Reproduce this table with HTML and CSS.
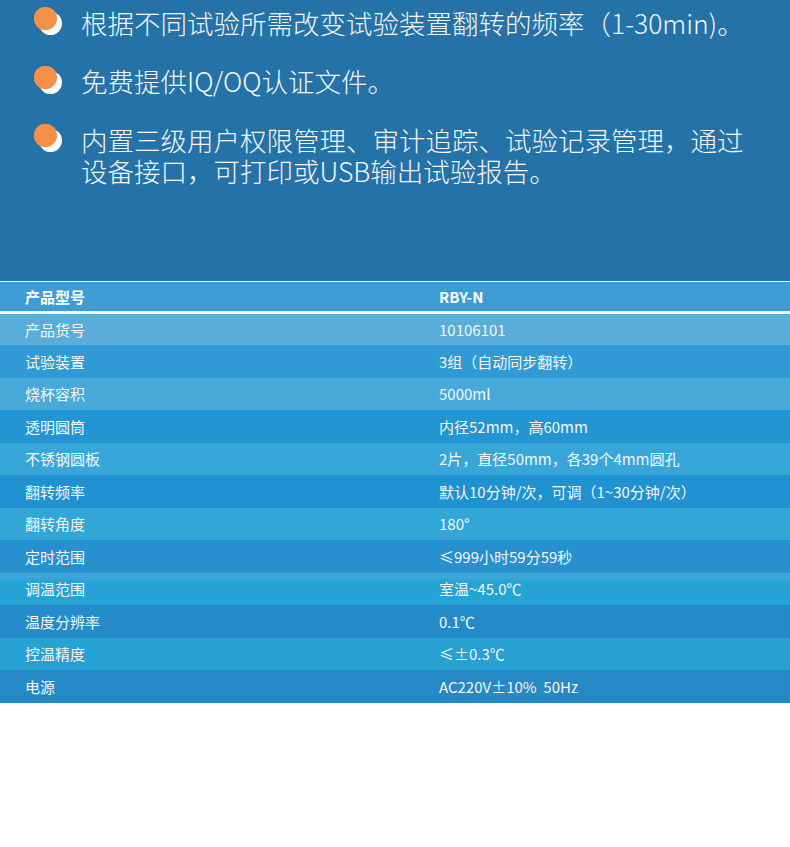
FILE: index.html
```html
<!DOCTYPE html>
<html lang="zh-CN">
<head>
<meta charset="utf-8">
<title>RBY-N</title>
<link rel="stylesheet" href="styles.css">
</head>
<body>
<section class="features">
  <ul class="feature-list">
    <li class="feature"><span class="dot"></span><p class="feature-text">根据不同试验所需改变试验装置翻转的频率（1-30min)。</p></li>
    <li class="feature"><span class="dot"></span><p class="feature-text">免费提供IQ/OQ认证文件。</p></li>
    <li class="feature"><span class="dot"></span><p class="feature-text">内置三级用户权限管理、审计追踪、试验记录管理，通过<br>设备接口，可打印或USB输出试验报告。</p></li>
  </ul>
</section>
<section class="specs">
  <div class="spec-head">
    <span>产品型号</span><span>RBY-N</span>
  </div>
  <div class="spec-body">
    <div class="row r1"><span>产品货号</span><span>10106101</span></div>
    <div class="row r2"><span>试验装置</span><span>3组（自动同步翻转）</span></div>
    <div class="row r3"><span>烧杯容积</span><span>5000ml</span></div>
    <div class="row r4"><span>透明圆筒</span><span>内径52mm，高60mm</span></div>
    <div class="row r5"><span>不锈钢圆板</span><span>2片，直径50mm，各39个4mm圆孔</span></div>
    <div class="row r6"><span>翻转频率</span><span>默认10分钟/次，可调（1~30分钟/次）</span></div>
    <div class="row r7"><span>翻转角度</span><span>180°</span></div>
    <div class="row r8"><span>定时范围</span><span>≤999小时59分59秒</span></div>
    <div class="row r9"><span>调温范围</span><span>室温~45.0℃</span></div>
    <div class="row r10"><span>温度分辨率</span><span>0.1℃</span></div>
    <div class="row r11"><span>控温精度</span><span>≤±0.3℃</span></div>
    <div class="row r12"><span>电源</span><span>AC220V±10%&nbsp; 50Hz</span></div>
  </div>
</section>
</body>
</html>
```

FILE: styles.css
```css
* { box-sizing: border-box; }
html, body {
  margin: 0;
  padding: 0;
  background: #ffffff;
}
body {
  width: 790px;
  font-family: "Noto Sans CJK SC", "Noto Sans", sans-serif;
  color: #ffffff;
}
.features {
  height: 281px;
  background: #2572a8;
  padding-top: 6.5px;
}
.feature-list {
  list-style: none;
  margin: 0;
  padding: 0;
  display: flex;
  flex-direction: column;
  gap: 27.5px;
}
.feature {
  display: flex;
  align-items: flex-start;
}
.dot {
  position: relative;
  flex: none;
  width: 23px;
  height: 23px;
  margin: 0.5px 24px 0 34px;
  border-radius: 50%;
  background: #f29147;
}
.dot::before {
  content: "";
  position: absolute;
  left: 5px;
  top: 5px;
  width: 23px;
  height: 23px;
  border-radius: 50%;
  background: #ffffff;
  z-index: -1;
}
.dot { z-index: 0; }
.dot::after {
  content: "";
  position: absolute;
  inset: 0;
  border-radius: 50%;
  background: #f29147;
}
.feature-text {
  margin: 0;
  font-size: 26.5px;
  line-height: 31px;
  font-weight: 300;
  color: #f2f6fa;
  white-space: nowrap;
}
.specs {
  border-top: 1px solid #ffffff;
}
.spec-head,
.row {
  display: grid;
  grid-template-columns: 414px 1fr;
  align-items: center;
  padding-left: 25px;
  font-size: 15px;
  white-space: nowrap;
}
.spec-head {
  height: 32px;
  background: #3c9cd3;
  border-bottom: 3px solid #f4f8fb;
  font-weight: 700;
}
.spec-body {
  display: grid;
  grid-template-rows: 31px repeat(11, 32.5px);
}
.row { color: #f4f8fc; }
.r1 { background: #5aacd9; }
.r2 { background: #2f9ad4; }
.r3 { background: #48a9db; }
.r4 { background: #2395d3; }
.r5 { background: #37a7da; }
.r6 { background: #2192d1; }
.r7 { background: #31a6d7; }
.r8 { background: #2790ce; }
.r9 { background: linear-gradient(#3ea7d7 0, #3ea7d7 4px, #25a3d5 9px); }
.r10 { background: #238bc7; }
.r11 { background: #26a1d2; }
.r12 { background: #2688c4; }
```
